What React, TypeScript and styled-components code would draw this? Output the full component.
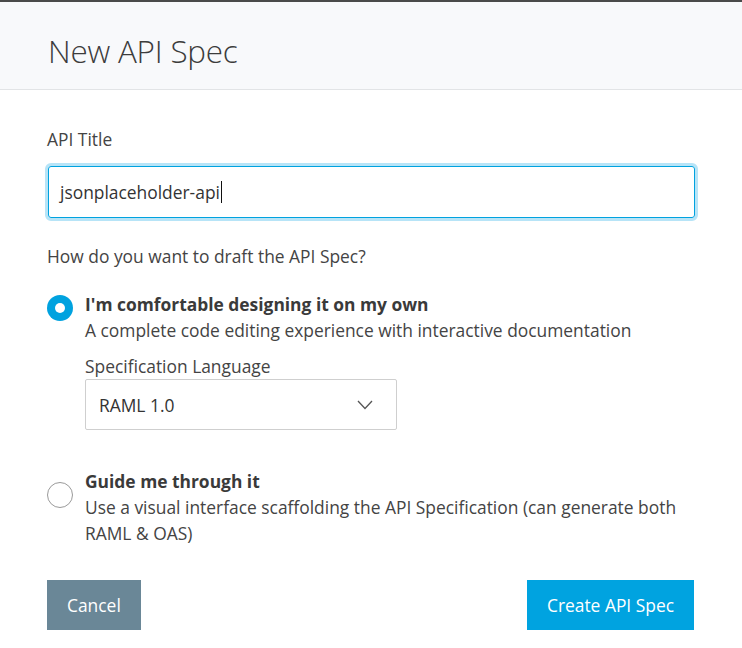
import React from "react";
import styled, { createGlobalStyle } from "styled-components";

const Global = createGlobalStyle`
  html, body { margin: 0; padding: 0; background: #fff; }
  body { font-family: "Open Sans", "Liberation Sans", sans-serif; color: #3a3a3a; }
  * { box-sizing: border-box; }
`;

const Backdrop = styled.div`
  height: 2px;
  background: #4a4a4a;
`;

const Modal = styled.div`
  width: 742px;
  background: #fff;
`;

const Header = styled.div`
  height: 88px;
  background: #f8f9fb;
  border-bottom: 1px solid #e2e4e6;
  display: flex;
  align-items: center;
  padding: 10px 48px 0 48px;
`;

const Title = styled.h1`
  margin: 0;
  font-family: "Open Sans", sans-serif;
  font-weight: 300;
  font-size: 31.4px;
  line-height: 32px;
  color: #3c3c3c;
  letter-spacing: -0.2px;
`;

const Body = styled.div`
  padding: 38px 48px 0 47px;
  display: flex;
  flex-direction: column;
`;

const Label = styled.div`
  font-size: 17.4px;
  line-height: 22px;
  color: #444;
`;

const InputWrap = styled.div`
  margin-top: 13px;
  width: 653px;
  height: 58px;
  margin-left: -2px;
  border: 3px solid #b7e4f7;
  border-radius: 6px;
  display: flex;
`;

const Input = styled.div`
  flex: 1;
  border: 1px solid #00a2df;
  border-radius: 3px;
  display: flex;
  align-items: center;
  padding: 0 11px;
  font-size: 17.4px;
  color: #333;
`;

const Caret = styled.span`
  display: inline-block;
  width: 1px;
  height: 22px;
  background: #111;
  margin-left: 1px;
`;

const Question = styled(Label)`
  margin-top: 24px;
`;

const Option = styled.div<{ $top: number }>`
  display: flex;
  margin-top: ${(p) => p.$top}px;
`;

const Radio = styled.div<{ $checked?: boolean }>`
  flex: none;
  width: 26px;
  height: 26px;
  border-radius: 50%;
  margin-top: ${(p) => (p.$checked ? 4 : 14)}px;
  margin-right: 12px;
  ${(p) =>
    p.$checked
      ? `background: #00a2df; display:flex; align-items:center; justify-content:center;
         &::after { content: ""; width: 10px; height: 10px; border-radius: 50%; background: #fff; }`
      : `border: 1px solid #9a9a9a; background: #fff;`}
`;

const OptionText = styled.div`
  display: flex;
  flex-direction: column;
  flex: 1;
`;

const OptionTitle = styled.div`
  font-weight: 700;
  font-size: 17.4px;
  line-height: 26px;
  color: #3a3a3a;
`;

const OptionDesc = styled.div`
  font-size: 17.4px;
  line-height: 26px;
  color: #444;
`;

const SubLabel = styled(Label)`
  margin-top: 12px;
`;

const Select = styled.div`
  margin-top: 2px;
  width: 312px;
  height: 51px;
  border: 1px solid #cfcfcf;
  border-radius: 2px;
  display: flex;
  align-items: center;
  justify-content: space-between;
  padding: 0 23px 0 13px;
  font-size: 17.4px;
  color: #333;
`;

const Footer = styled.div`
  display: flex;
  justify-content: space-between;
  margin-top: 34px;
`;

const Button = styled.button<{ $primary?: boolean }>`
  height: 50px;
  border: none;
  border-radius: 0;
  font-family: "Open Sans", sans-serif;
  font-size: 17.4px;
  color: #fff;
  padding: 0 20px;
  background: ${(p) => (p.$primary ? "#00a3e0" : "#6a8797")};
`;

export default function App() {
  return (
    <>
      <Global />
      <Backdrop />
      <Modal>
        <Header>
          <Title>New API Spec</Title>
        </Header>
        <Body>
          <Label>API Title</Label>
          <InputWrap>
            <Input>
              jsonplaceholder-api<Caret />
            </Input>
          </InputWrap>
          <Question>How do you want to draft the API Spec?</Question>
          <Option $top={24}>
            <Radio $checked />
            <OptionText>
              <OptionTitle>I'm comfortable designing it on my own</OptionTitle>
              <OptionDesc>A complete code editing experience with interactive documentation</OptionDesc>
              <SubLabel>Specification Language</SubLabel>
              <Select>
                <span>RAML 1.0</span>
                <svg width="16" height="10" viewBox="0 0 16 10" fill="none">
                  <path d="M1 1l7 7.5L15 1" stroke="#555" strokeWidth="1.3" />
                </svg>
              </Select>
            </OptionText>
          </Option>
          <Option $top={38}>
            <Radio />
            <OptionText>
              <OptionTitle>Guide me through it</OptionTitle>
              <OptionDesc>
                Use a visual interface scaffolding the API Specification (can generate both RAML &amp; OAS)
              </OptionDesc>
            </OptionText>
          </Option>
          <Footer>
            <Button>Cancel</Button>
            <Button $primary>Create API Spec</Button>
          </Footer>
        </Body>
      </Modal>
    </>
  );
}
